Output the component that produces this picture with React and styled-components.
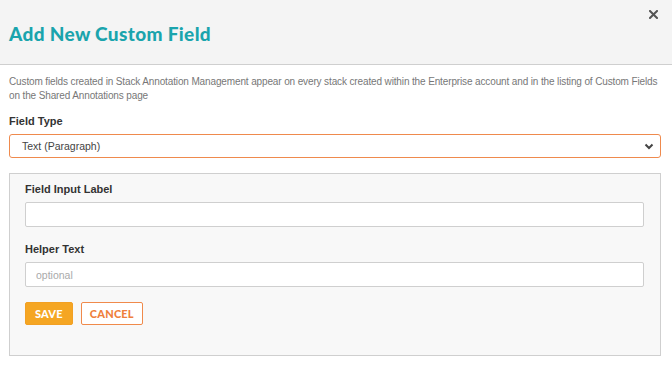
import React from "react";
import styled, { createGlobalStyle } from "styled-components";

const Global = createGlobalStyle`
  html, body { margin: 0; padding: 0; background: #fff; }
  body { font-family: "Liberation Sans", Arial, sans-serif; }
  * { box-sizing: border-box; }
`;

const Modal = styled.div`
  width: 672px;
  height: 375px;
  background: #fff;
  display: flex;
  flex-direction: column;
  position: relative;
`;

const Header = styled.header`
  height: 65px;
  background: #f4f4f4;
  border-bottom: 1px solid #cfcfcf;
  display: flex;
  align-items: center;
  padding: 2px 9px 0;
`;

const Title = styled.h1`
  margin: 0;
  font-family: Lato, "Open Sans", sans-serif;
  font-weight: 900;
  font-size: 19px;
  color: #1aa4ad;
  letter-spacing: 0.35px;
`;

const Close = styled.button`
  position: absolute;
  top: 7px;
  right: 12px;
  width: 14px;
  height: 14px;
  padding: 0;
  border: 0;
  background: transparent;
  display: flex;
  align-items: center;
  justify-content: center;
  cursor: pointer;
`;

const Body = styled.div`
  padding: 10px 11px 0 9px;
  display: flex;
  flex-direction: column;
`;

const Description = styled.p`
  margin: 0 -4px 0 0;
  font-size: 10px;
  line-height: 14px;
  color: #777;
  letter-spacing: -0.13px;
`;

const Label = styled.label`
  display: block;
  font-family: "Liberation Sans", Arial, sans-serif;
  font-weight: 700;
  font-size: 11px;
  line-height: 13px;
  color: #333;
  margin: ${(p) => p.$top || 0}px 0 6px;
`;

const SelectWrap = styled.div`
  height: 24px;
  border: 1px solid #ef8a4d;
  border-radius: 3px;
  background: #fff;
  display: flex;
  align-items: center;
  padding: 0 6px 0 12px;
  font-size: 10.5px;
  color: #444;
`;

const Chevron = styled.span`
  margin-left: auto;
  display: flex;
  align-items: center;
`;

const Panel = styled.section`
  margin-top: 15px;
  height: 183px;
  background: #f8f8f8;
  border: 1px solid #cfcfcf;
  padding: 9px 16px 0 15px;
  display: flex;
  flex-direction: column;
`;

const Input = styled.input`
  width: 100%;
  height: 25px;
  border: 1px solid #cfcfcf;
  border-radius: 2px;
  background: #fff;
  padding: 0 10px;
  font-family: "Liberation Sans", Arial, sans-serif;
  font-size: 10.5px;
  color: #444;
  outline: none;
  &::placeholder { color: #aaa; }
`;

const Actions = styled.div`
  display: flex;
  gap: 8px;
  margin-top: 15px;
`;

const Button = styled.button`
  height: 23px;
  padding: 0 ${(p) => (p.$primary ? 9 : 8)}px;
  border-radius: 2px;
  border: 1px solid ${(p) => (p.$primary ? "#f2a024" : "#f08a4b")};
  background: ${(p) => (p.$primary ? "#f5a623" : "#fff")};
  color: ${(p) => (p.$primary ? "#fff" : "#ef7f3c")};
  font-family: Lato, "Open Sans", sans-serif;
  font-weight: 900;
  font-size: 11px;
  letter-spacing: 0.2px;
  cursor: pointer;
`;

export default function App() {
  return (
    <Modal>
      <Global />
      <Header>
        <Title>Add New Custom Field</Title>
      </Header>
      <Close aria-label="Close">
        <svg width="9" height="9" viewBox="0 0 9 9">
          <path d="M1 1L8 8M8 1L1 8" stroke="#555" strokeWidth="2" strokeLinecap="square" />
        </svg>
      </Close>
      <Body>
        <Description>
          Custom fields created in Stack Annotation Management appear on every stack created within the Enterprise account and in the listing of Custom Fields on the Shared Annotations page
        </Description>
        <Label $top={12}>Field Type</Label>
        <SelectWrap>
          Text (Paragraph)
          <Chevron>
            <svg width="10" height="7" viewBox="0 0 10 7">
              <path d="M1.5 1.5L5 5L8.5 1.5" fill="none" stroke="#444" strokeWidth="2" />
            </svg>
          </Chevron>
        </SelectWrap>
        <Panel>
          <Label $top={0}>Field Input Label</Label>
          <Input />
          <Label $top={16}>Helper Text</Label>
          <Input placeholder="optional" />
          <Actions>
            <Button $primary>SAVE</Button>
            <Button>CANCEL</Button>
          </Actions>
        </Panel>
      </Body>
    </Modal>
  );
}
